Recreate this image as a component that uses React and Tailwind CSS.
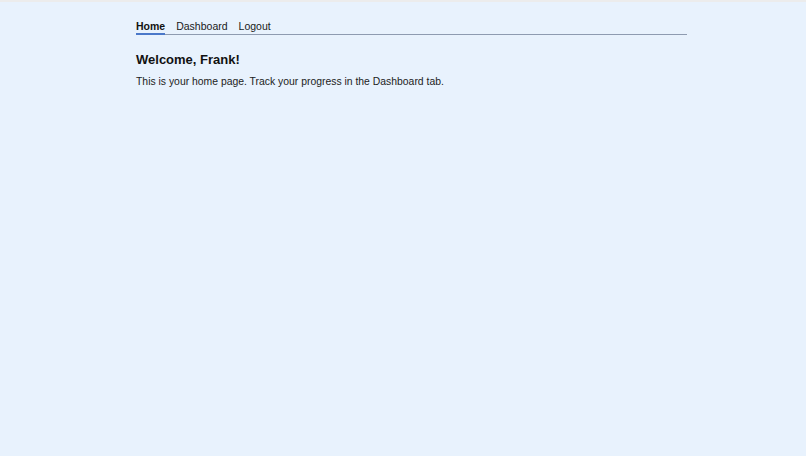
export default function App() {
  return (
    <div
      className="min-h-[456px] bg-[#e8f2fd] border-t-2 border-[#ececec] text-[#1a1a1a]"
      style={{ fontFamily: '"Liberation Sans", Arial, sans-serif' }}
    >
      <div className="ml-[136px] w-[551px] pt-[17.5px]">
        <nav className="flex gap-[11px] border-b border-[#8e9bb0] text-[10.5px] leading-[12px]">
          <a className="font-bold text-[#111] pb-[1px] border-b-2 border-[#4a78c9] -mb-px">Home</a>
          <a className="text-[#1a1a1a] pb-[1px]">Dashboard</a>
          <a className="text-[#1a1a1a] pb-[1px]">Logout</a>
        </nav>
        <h1 className="mt-[17.5px] text-[13px] leading-[15px] font-bold text-[#111]">Welcome, Frank!</h1>
        <p className="mt-[9px] text-[10.4px] leading-[12px] text-[#222]">
          This is your home page. Track your progress in the Dashboard tab.
        </p>
      </div>
    </div>
  );
}
